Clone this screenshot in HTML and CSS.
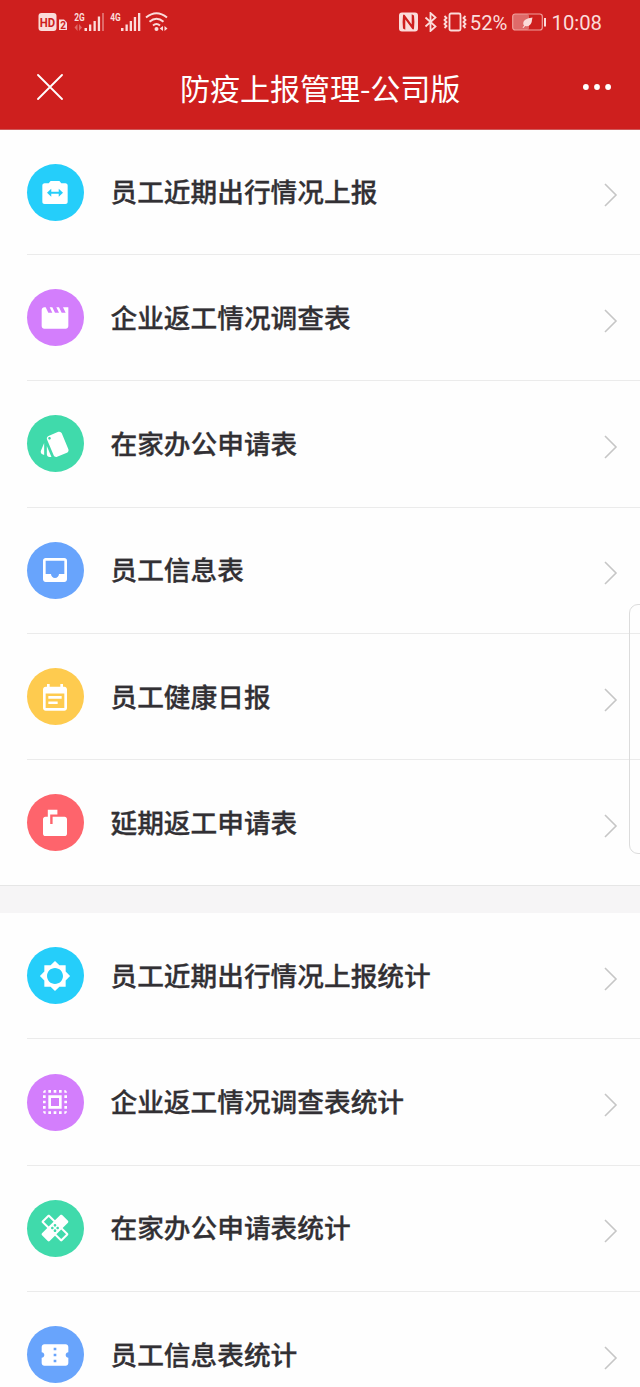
FILE: index.html
```html
<!DOCTYPE html>
<html lang="zh-CN">
<head>
    <meta charset="UTF-8">
    <meta name="viewport" content="width=device-width, initial-scale=1.0">
    <title>防疫上报管理-公司版</title>
    <link rel="stylesheet" href="styles.css">
</head>
<body>
    <div class="header">
        <!-- Status bar -->
        <div class="status-bar">
            <svg class="signals" width="132" height="24" viewBox="0 0 132 24">
                <rect x="0.5" y="4" width="18" height="18" rx="3"/>
                <text class="hd" x="1.8" y="17.5" textLength="15.4" lengthAdjust="spacingAndGlyphs">HD</text>
                <path d="M21 10.500h5l3 3v7.500h-8z"/>
                <text class="sim" x="22.200" y="19.500">2</text>
                <text class="net" x="36.300" y="12" textLength="10.500" lengthAdjust="spacingAndGlyphs">2G</text>
                <path class="dim" d="M39.500 15v7l-3-3.500zM41 22v-7l3 3.500zM64 4h2v18h-2z"/>
                <path d="M46.500 19H49v3h-2.500zM51 15.500h2.300V22H51zM55.500 12h2.300v10h-2.300zM59.800 7.500h2.300V22h-2.300z"/>
                <text class="net" x="72.300" y="12" textLength="10.500" lengthAdjust="spacingAndGlyphs">4G</text>
                <path d="M83 19h2.500v3H83zM87.500 15.500h2.300V22h-2.300zM91.700 12H94v10h-2.300zM95.800 8h2.300v14h-2.300zM100 4h2.300v18H100z"/>
                <path class="wave" d="M108 8.500q10.500-8.500 21 0M111.500 12.700q7-6 14 0M115 16.500q3.500-3 7 0"/>
                <circle cx="118.500" cy="20" r="2"/>
                <path d="M125 17v5l-3.300-2.500zM126.500 22v-5l3 2.500z"/>
            </svg>
            <div class="status-right">
                <svg width="19" height="20" viewBox="0 0 19 20">
                    <path fill-rule="evenodd" d="M3 .5h13q3 0 3 3v13q0 3-3 3H3q-3 0-3-3v-13q0-3 3-3zM4 3.500q-.8 6.500 0 13l2.300 1.300V7.500l7 9.500q1.200 1 1.700-.5.800-6.500 0-13l-2.300-1.300v10.300L5.700 3Q4.500 2 4 3.500z"/>
                </svg>
                <svg class="line-icon" width="13" height="20" viewBox="0 0 13 20">
                    <path d="M1.500 5.500l10 9L6.500 19V1l5 4.500-10 9"/>
                </svg>
                <svg class="line-icon" width="24" height="20" viewBox="0 0 24 20">
                    <rect x="6.500" y="1.500" width="11" height="17" rx="1.500"/>
                    <path class="zigzag" d="M1.500 4l2 2-2 2 2 2-2 2 2 2-2 2M22.500 4l-2 2 2 2-2 2 2 2-2 2 2 2"/>
                </svg>
                <span class="percent">52%</span>
                <svg class="battery" width="35" height="18" viewBox="0 0 35 18">
                    <rect class="battery-level" x="1" y="1" width="16" height="16" rx="2"/>
                    <rect class="battery-case" x=".7" y="1" width="29.600" height="16" rx="2.500"/>
                    <path d="M32 5h2v8.500h-2zM20.500 4.500q-9 1-9.300 5.500 0 2 1 2.500l-1.700 2 1 .5 1.700-2q5 1 6.500-4 .3-2.500.8-4.500z"/>
                </svg>
                <span class="clock">10:08</span>
            </div>
        </div>
        <!-- Title bar -->
        <div class="title-bar">
            <svg class="close" width="26" height="26" viewBox="0 0 26 26">
                <path d="M1 1l24 24M25 1L1 25"/>
            </svg>
            <h1>防疫上报管理-公司版</h1>
            <svg class="more" width="28" height="6" viewBox="0 0 28 6">
                <circle cx="2.900" cy="3" r="2.900"/>
                <circle cx="14" cy="3" r="2.900"/>
                <circle cx="25.100" cy="3" r="2.900"/>
            </svg>
        </div>
    </div>

    <!-- Report forms -->
    <div class="list">
        <div class="row">
            <div class="icon blue-light">
                <svg viewBox="0 0 24 24"><path fill-rule="evenodd" d="M8.700 3.700h6.600l1.400 1.800h3.100c1 0 1.700.7 1.700 1.700v12.100c0 1-.7 1.700-1.700 1.700H4.200c-1 0-1.700-.7-1.700-1.700V7.200c0-1 .7-1.700 1.700-1.700h3.100zM6 12.600l3.200 3v-2.300h5.600v2.300l3.200-3-3.200-3v2.300H9.200V9.600z"/></svg>
            </div>
            <div class="label">员工近期出行情况上报</div>
            <svg class="arrow" viewBox="0 0 14 24"><path d="M1 1l11 11L1 23"/></svg>
        </div>
        <div class="row">
            <div class="icon purple">
                <svg viewBox="0 0 24 24"><path d="M18 4l2 4h-3l-2-4h-2l2 4h-3l-2-4H8l2 4H7L5 4H4c-1.100 0-1.990.9-1.990 2L2 18c0 1.100.9 2 2 2h16c1.100 0 2-.9 2-2V4h-4z"/></svg>
            </div>
            <div class="label">企业返工情况调查表</div>
            <svg class="arrow" viewBox="0 0 14 24"><path d="M1 1l11 11L1 23"/></svg>
        </div>
        <div class="row">
            <div class="icon green">
                <svg viewBox="0 0 24 24"><path d="M2.530 19.650l1.340.56v-9.030l-2.430 5.860c-.41 1.020.08 2.190 1.090 2.610zm19.500-3.700L17.070 3.980c-.31-.75-1.040-1.210-1.810-1.230-.26 0-.53.04-.79.15L7.100 5.950c-.75.31-1.210 1.030-1.230 1.800-.01.27.04.54.15.8l4.960 11.970c.31.76 1.050 1.220 1.830 1.230.26 0 .52-.05.77-.15l7.360-3.050c1.020-.42 1.510-1.590 1.090-2.600zM7.880 8.750c-.55 0-1-.45-1-1s.45-1 1-1 1 .45 1 1-.45 1-1 1zm-2 11c0 1.100.9 2 2 2h1.450l-3.450-8.340v6.340z"/></svg>
            </div>
            <div class="label">在家办公申请表</div>
            <svg class="arrow" viewBox="0 0 14 24"><path d="M1 1l11 11L1 23"/></svg>
        </div>
        <div class="row">
            <div class="icon blue">
                <svg viewBox="0 0 24 24"><path d="M19 3H4.990c-1.110 0-1.980.89-1.980 2L3 19c0 1.100.88 2 1.990 2H19c1.100 0 2-.9 2-2V5c0-1.110-.9-2-2-2zm0 12h-4c0 1.660-1.350 3-3 3s-3-1.340-3-3H4.990V5H19v10z"/></svg>
            </div>
            <div class="label">员工信息表</div>
            <svg class="arrow" viewBox="0 0 14 24"><path d="M1 1l11 11L1 23"/></svg>
        </div>
        <div class="row">
            <div class="icon yellow">
                <svg viewBox="0 0 24 24"><path transform="translate(0 1.300)" d="M17 10H7v2h10v-2zm2-7h-1V1h-2v2H8V1H6v2H5c-1.110 0-1.990.9-1.990 2L3 19c0 1.100.89 2 2 2h14c1.100 0 2-.9 2-2V5c0-1.100-.9-2-2-2zm0 16H5V8h14v11zm-5-5H7v2h7v-2z"/></svg>
            </div>
            <div class="label">员工健康日报</div>
            <svg class="arrow" viewBox="0 0 14 24"><path d="M1 1l11 11L1 23"/></svg>
        </div>
        <div class="row">
            <div class="icon red">
                <svg viewBox="0 0 24 24"><path transform="translate(1.200 2) scale(.9)" d="M20 6H10v6H8V4h6V0H6v6H4c-1.100 0-2 .9-2 2v12c0 1.100.9 2 2 2h16c1.100 0 2-.9 2-2V8c0-1.100-.9-2-2-2z"/></svg>
            </div>
            <div class="label">延期返工申请表</div>
            <svg class="arrow" viewBox="0 0 14 24"><path d="M1 1l11 11L1 23"/></svg>
        </div>
    </div>

    <!-- Statistics -->
    <div class="list stats">
        <div class="row">
            <div class="icon blue-light">
                <svg viewBox="0 0 24 24"><path d="M20 8.690V4h-4.690L12 .69 8.690 4H4v4.690L.69 12 4 15.310V20h4.690L12 23.310 15.310 20H20v-4.690L23.310 12 20 8.690zM12 18c-3.310 0-6-2.690-6-6s2.690-6 6-6 6 2.690 6 6-2.690 6-6 6z"/></svg>
            </div>
            <div class="label">员工近期出行情况上报统计</div>
            <svg class="arrow" viewBox="0 0 14 24"><path d="M1 1l11 11L1 23"/></svg>
        </div>
        <div class="row">
            <div class="icon purple">
                <svg viewBox="0 0 24 24"><path d="M3 5h2V3c-1.100 0-2 .9-2 2zm0 8h2v-2H3v2zm4 8h2v-2H7v2zM3 9h2V7H3v2zm10-6h-2v2h2V3zm6 0v2h2c0-1.100-.9-2-2-2zM5 21v-2H3c0 1.100.9 2 2 2zm-2-4h2v-2H3v2zM9 3H7v2h2V3zm2 18h2v-2h-2v2zm8-8h2v-2h-2v2zm0 8c1.100 0 2-.9 2-2h-2v2zm0-12h2V7h-2v2zm0 8h2v-2h-2v2zm-4 4h2v-2h-2v2zm0-16h2V3h-2v2zM7 17h10V7H7v10zm2-8h6v6H9V9z"/></svg>
            </div>
            <div class="label">企业返工情况调查表统计</div>
            <svg class="arrow" viewBox="0 0 14 24"><path d="M1 1l11 11L1 23"/></svg>
        </div>
        <div class="row">
            <div class="icon green">
                <svg viewBox="0 0 24 24"><path d="M17.730 12.020l3.980-3.980c.39-.39.39-1.020 0-1.410l-4.340-4.340c-.39-.39-1.020-.39-1.410 0l-3.980 3.980L8 2.290C7.800 2.100 7.550 2 7.290 2c-.25 0-.51.1-.7.29L2.250 6.630c-.39.39-.39 1.020 0 1.410l3.980 3.980L2.250 16c-.39.39-.39 1.020 0 1.410l4.340 4.340c.39.39 1.020.39 1.410 0l3.980-3.980 3.980 3.980c.2.2.45.29.71.29.26 0 .51-.1.71-.29l4.340-4.340c.39-.39.39-1.020 0-1.410l-3.990-3.980zM12 9c.55 0 1 .45 1 1s-.45 1-1 1-1-.45-1-1 .45-1 1-1zm-4.710 1.960L3.660 7.340l3.630-3.630 3.620 3.620-3.620 3.630zM10 13c-.55 0-1-.45-1-1s.45-1 1-1 1 .45 1 1-.45 1-1 1zm2 2c-.55 0-1-.45-1-1s.45-1 1-1 1 .45 1 1-.45 1-1 1zm2-4c.55 0 1 .45 1 1s-.45 1-1 1-1-.45-1-1 .45-1 1-1zm2.660 9.340l-3.630-3.620 3.630-3.630 3.620 3.620-3.620 3.630z"/></svg>
            </div>
            <div class="label">在家办公申请表统计</div>
            <svg class="arrow" viewBox="0 0 14 24"><path d="M1 1l11 11L1 23"/></svg>
        </div>
        <div class="row">
            <div class="icon blue">
                <svg viewBox="0 0 24 24"><path d="M22 10V6c0-1.110-.9-2-2-2H4c-1.100 0-1.990.89-1.990 2v4c1.100 0 1.990.9 1.990 2s-.89 2-2 2v4c0 1.100.9 2 2 2h16c1.100 0 2-.9 2-2v-4c-1.100 0-2-.9-2-2s.9-2 2-2zm-9 7.500h-2v-2h2v2zm0-4.500h-2v-2h2v2zm0-4.500h-2v-2h2v2z"/></svg>
            </div>
            <div class="label">员工信息表统计</div>
            <svg class="arrow" viewBox="0 0 14 24"><path d="M1 1l11 11L1 23"/></svg>
        </div>
    </div>

    <!-- Edge handle over the list -->
    <div class="edge-panel"></div>
</body>
</html>
```

FILE: styles.css
```css
* {
    margin: 0;
    padding: 0;
    box-sizing: border-box;
}

body {
    position: relative;
    width: 640px;
    height: 1387px;
    overflow: hidden;
    background-color: #f6f5f6;
    font-family: Roboto, "Noto Sans CJK SC", sans-serif;
}

svg {
    display: block;
    flex-shrink: 0;
}

.header {
    height: 130px;
    background-color: #ce1f1e;
    border-bottom: 1px solid #cf5a5a;
    color: white;
}

.status-bar {
    display: flex;
    justify-content: space-between;
    height: 44px;
    padding: 10px 38px 0 38px;
    color: #fbdcda;
    fill: #fbdcda;
}

.signals {
    margin-top: -1px;
    font-family: Roboto, sans-serif;
    font-weight: bold;
}

.hd {
    font-size: 13px;
    fill: #ce1f1e;
}

.sim {
    font-size: 10px;
    fill: #ce1f1e;
}

.net {
    font-size: 11.5px;
}

.dim {
    opacity: 0.4;
}

.wave {
    fill: none;
    stroke: #fbdcda;
    stroke-width: 2;
}

.status-right {
    display: flex;
    align-items: center;
    height: 24px;
    font-size: 20.3px;
    line-height: 24px;
}

.line-icon {
    margin-left: 6px;
    fill: none;
    stroke: #fbdcda;
    stroke-width: 1.8;
}

.zigzag {
    stroke-width: 1.8;
}

.percent {
    margin: 2px 0 0 3px;
}

.battery {
    margin-left: 5px;
}

.battery-level {
    opacity: 0.4;
}

.battery-case {
    fill: none;
    stroke: #f0a09c;
    stroke-width: 1.2;
}

.clock {
    margin: 2px 0 0 4px;
}

.title-bar {
    display: flex;
    align-items: center;
    height: 86px;
    padding: 0 29px 0 37px;
}

.title-bar h1 {
    flex: 1;
    margin-top: -1px;
    padding-left: 117px;
    font-family: "Noto Sans CJK SC", sans-serif;
    font-size: 30.1px;
    font-weight: normal;
    line-height: 44px;
    letter-spacing: -0.1px;
}

.close {
    stroke: white;
    stroke-width: 1.8;
    stroke-linecap: round;
}

.more {
    fill: white;
}

.list {
    padding-left: 26.5px;
    background-color: #fefefe;
    border-bottom: 1px solid #e6e6e6;
}

.stats {
    margin-top: 27px;
}

.row {
    display: flex;
    align-items: center;
    height: 126.3px;
    padding-right: 22.5px;
    border-bottom: 1px solid #ebebeb;
}

.list:not(.stats) .row:first-child {
    height: 125px;
}

.list:not(.stats) .row:last-child {
    height: 125px;
    border-bottom: none;
}

.icon {
    display: flex;
    justify-content: center;
    align-items: center;
    width: 57px;
    height: 57px;
    border-radius: 50%;
}

.icon svg {
    width: 32px;
    height: 32px;
    fill: white;
}

.blue-light {
    background-color: #25cefa;
}

.purple {
    background-color: #d37efc;
}

.green {
    background-color: #40daab;
}

.blue {
    background-color: #68a4fc;
}

.yellow {
    background-color: #fecb4f;
}

.red {
    background-color: #fe646c;
}

.label {
    flex: 1;
    margin: -2px 0 0 27px;
    font-family: "Noto Sans CJK SC", sans-serif;
    font-size: 26.7px;
    font-weight: 500;
    line-height: 40px;
    color: #323034;
    -webkit-text-stroke: 0.3px #323034;
}

.arrow {
    width: 14px;
    height: 24px;
    margin-top: 6px;
    fill: none;
    stroke: #c6c6c6;
    stroke-width: 1.6;
}

.edge-panel {
    position: absolute;
    top: 604px;
    right: -10px;
    width: 21px;
    height: 250px;
    border: 1px solid #dcdcdc;
    border-radius: 9px;
}
```
